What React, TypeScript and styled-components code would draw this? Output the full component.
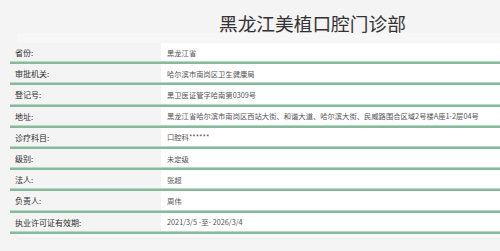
import React from "react";
import styled, { createGlobalStyle } from "styled-components";

const Global = createGlobalStyle`
  html, body { margin: 0; padding: 0; background: #f4f4f4; }
  body { font-family: "Microsoft YaHei", "Noto Sans CJK SC", "Noto Sans", sans-serif; overflow: hidden; }
`;

const Page = styled.div`
  width: 500px;
  height: 251px;
  overflow: hidden;
  background: #f4f4f4;
`;

const Title = styled.h1`
  margin: 0;
  padding: 10px 0 0 219px;
  height: 33px;
  box-sizing: border-box;
  font-size: 18.7px;
  line-height: 26px;
  font-weight: normal;
  color: #333;
  white-space: nowrap;
  font-family: "Noto Sans CJK SC", sans-serif;
`;

const Panel = styled.div`
  margin-left: 17px;
  background: #f7f7f7;
  padding-top: 10px;
  padding-bottom: 4px;
  border-bottom: 1px solid #ececec;
`;

const Table = styled.div`
  margin-left: -7px;
  display: grid;
  grid-template-columns: 151px 1fr;
`;

const Row = styled.div`
  display: contents;
`;

const Cell = styled.div<{ $label?: boolean }>`
  height: 21.2px;
  box-sizing: border-box;
  border-bottom: 2px solid #86ba9b;
  box-shadow: inset 0 -3px 0 -2px #b9d8c4;
  display: flex;
  align-items: center;
  padding-left: ${(p) => (p.$label ? "5px" : "6px")};
  background: ${(p) => (p.$label ? "#f4f4f4" : "#ffffff")};
  color: ${(p) => (p.$label ? "#2e2e2e" : "#555")};
  font-size: ${(p) => (p.$label ? "8px" : "7.3px")};
  font-family: "Noto Sans CJK SC", sans-serif;
  white-space: nowrap;
  overflow: hidden;
`;

const rows: [string, string][] = [
  ["省份:", "黑龙江省"],
  ["审批机关:", "哈尔滨市南岗区卫生健康局"],
  ["登记号:", "黑卫医证管字哈南第0309号"],
  ["地址:", "黑龙江省哈尔滨市南岗区西站大街、和谐大道、哈尔滨大街、民威路围合区域2号楼A座1-2层04号"],
  ["诊疗科目:", "口腔科******"],
  ["级别:", "未定级"],
  ["法人:", "张超"],
  ["负责人:", "周伟"],
  ["执业许可证有效期:", "2021/3/5 -至- 2026/3/4"],
];

export default function App() {
  return (
    <Page>
      <Global />
      <Title>黑龙江美植口腔门诊部</Title>
      <Panel>
        <Table>
          {rows.map(([k, v]) => (
            <Row key={k}>
              <Cell $label>{k}</Cell>
              <Cell>{v}</Cell>
            </Row>
          ))}
        </Table>
      </Panel>
    </Page>
  );
}
